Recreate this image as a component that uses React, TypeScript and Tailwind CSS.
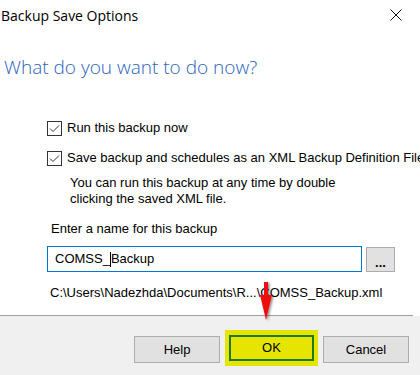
import React from "react"

function CheckBox() {
  return (
    <span className="w-[15px] h-[15px] shrink-0 border border-[#333333] bg-white flex items-center justify-center">
      <svg width="13" height="13" viewBox="0 0 13 13">
        <path d="M2 6.5 L5 9.5 L11 3.5" fill="none" stroke="#333333" strokeWidth="1" />
      </svg>
    </span>
  )
}

function RedArrow() {
  return (
    <svg
      className="absolute left-[256px] top-[280px]"
      width="22"
      height="44"
      viewBox="0 0 22 44"
    >
      <defs>
        <filter id="sh" x="-50%" y="-50%" width="200%" height="200%">
          <feDropShadow dx="1.5" dy="1" stdDeviation="1.2" floodColor="#000" floodOpacity="0.45" />
        </filter>
      </defs>
      <g filter="url(#sh)">
        <rect x="8" y="2" width="4" height="15" fill="#ee1111" />
        <path d="M4 15 L16 15 L10 40 Z" fill="#ee1111" />
      </g>
    </svg>
  )
}

export default function App() {
  const body = { fontFamily: '"Liberation Sans", Arial, sans-serif' }
  return (
    <div
      className="relative w-[420px] h-[375px] bg-white flex flex-col overflow-hidden text-black"
      style={body}
    >
      {/* title bar */}
      <div className="h-[30px] flex items-center justify-between pr-[18px]">
        <span className="text-[14px] pl-[1px]" style={{ fontFamily: '"Open Sans", "Noto Sans", sans-serif' }}>
          Backup Save Options
        </span>
        <svg width="12" height="12" viewBox="0 0 12 12">
          <path d="M0.5 0.5 L11.5 11.5 M11.5 0.5 L0.5 11.5" stroke="#111" strokeWidth="1" />
        </svg>
      </div>

      <h1
        className="mt-[24px] pl-[4px] text-[19px] leading-[26px] text-[#2b63c0]"
        style={{ fontFamily: '"Open Sans", "Noto Sans", sans-serif', fontWeight: 300 }}
      >
        What do you want to do now?
      </h1>

      <div className="pl-[47px] text-[13px] leading-4">
        <label className="mt-[40px] flex items-center gap-[5px] h-4">
          <CheckBox />
          <span>Run this backup now</span>
        </label>
        <label className="mt-[14px] flex items-center gap-[5px] h-4 whitespace-nowrap">
          <CheckBox />
          <span>Save backup and schedules as an XML Backup Definition File</span>
        </label>
        <p className="mt-[9px] pl-[23px]">
          You can run this backup at any time by double
          <br />
          clicking the saved XML file.
        </p>

        <p className="mt-[14px] pl-[4px]">Enter a name for this backup</p>
        <div className="mt-[9px] flex items-start gap-[4px]">
          <div className="w-[315px] h-[26px] border border-[#0078d7] flex items-center pl-[7px]">
            <span>COMSS_</span>
            <span className="w-px h-[15px] bg-black" />
            <span>Backup</span>
          </div>
          <button className="mt-px w-[29px] h-[25px] border border-[#adadad] bg-[#e1e1e1] text-[13px] font-bold leading-none pb-[2px] flex items-end justify-center">
            ...
          </button>
        </div>
        <p className="mt-[13px] pl-[3px]">C:\Users\Nadezhda\Documents\R...\COMSS_Backup.xml</p>
      </div>

      <div className="mt-[14px] w-[413px] h-px bg-[#a0a0a0]" />

      <div className="flex-1 bg-[#f0f0f0] flex items-start justify-end gap-[5px] pr-[11px] pt-[14px] text-[13px]">
        <button className="mt-[6px] w-[86px] h-[27px] border border-[#adadad] bg-[#e1e1e1]">Help</button>
        <div className="w-[93px] h-[36px] bg-[#e5e500] flex items-center justify-center">
          <button className="w-[85px] h-[26px] border-2 border-[#1e7a1e] bg-[#e5e500]">OK</button>
        </div>
        <button className="mt-[6px] w-[86px] h-[27px] border border-[#adadad] bg-[#e1e1e1]">Cancel</button>
      </div>

      <RedArrow />
    </div>
  )
}
